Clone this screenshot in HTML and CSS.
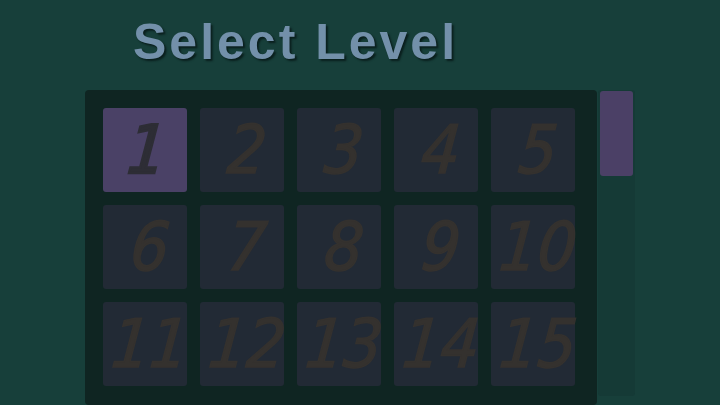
FILE: index.html
```html
<!DOCTYPE html>
<html>
<head>
<meta charset="utf-8">
<link rel="stylesheet" href="styles.css">
</head>
<body>
<div class="screen">
  <h1 class="title">Select Level</h1>
  <div class="main">
    <div class="panel">
      <div class="grid">
        <div class="tile current"><span>1</span></div>
        <div class="tile"><span>2</span></div>
        <div class="tile"><span>3</span></div>
        <div class="tile"><span>4</span></div>
        <div class="tile"><span>5</span></div>
        <div class="tile"><span>6</span></div>
        <div class="tile"><span>7</span></div>
        <div class="tile"><span>8</span></div>
        <div class="tile"><span>9</span></div>
        <div class="tile"><span>10</span></div>
        <div class="tile"><span>11</span></div>
        <div class="tile"><span>12</span></div>
        <div class="tile"><span>13</span></div>
        <div class="tile"><span>14</span></div>
        <div class="tile"><span>15</span></div>
      </div>
    </div>
    <div class="scrollbar">
      <div class="thumb"></div>
    </div>
  </div>
</div>
</body>
</html>
```
FILE: styles.css
```css
html, body {
  margin: 0;
  padding: 0;
  width: 720px;
  height: 405px;
  overflow: hidden;
  background: #173f3a;
}
.screen {
  width: 720px;
  height: 405px;
  display: flex;
  flex-direction: column;
}
.title {
  margin: 0;
  padding: 17px 0 0 133px;
  height: 50px;
  font-family: "Liberation Sans", Arial, sans-serif;
  font-weight: bold;
  font-size: 50px;
  line-height: 50px;
  letter-spacing: 3px;
  color: #7390aa;
  text-shadow: 2px 2px 2px rgba(5, 20, 20, 0.75);
}
.main {
  margin-top: 23px;
  margin-left: 85px;
  display: flex;
  gap: 1px;
  align-items: flex-start;
}
.panel {
  width: 472px;
  height: 297px;
  padding: 18px 22px 0 18px;
  background: #0f2522;
  border-radius: 4px;
}
.grid {
  display: grid;
  grid-template-columns: repeat(5, 84px);
  grid-auto-rows: 84px;
  gap: 13px;
}
.tile {
  background: #222a35;
  border-radius: 3px;
  display: flex;
  align-items: center;
  justify-content: center;
}
.tile span {
  display: inline-block;
  font-family: "DejaVu Sans Condensed", "DejaVu Sans", sans-serif;
  font-stretch: condensed;
  font-weight: normal;
  font-style: oblique;
  font-size: 67px;
  line-height: 1;
  color: #34312e;
  -webkit-text-stroke: 1.5px #34312e;
  transform: translateX(5px) skewX(-5deg);
  white-space: nowrap;
}
.tile.current {
  background: #4a4166;
}
.tile.current span {
  color: #2d2d35;
  -webkit-text-stroke: 2.4px #2d2d35;
  transform: translateX(2px) skewX(-5deg);
}
.scrollbar {
  width: 37px;
  height: 306px;
  background: #153a36;
  border-radius: 3px;
  padding: 1px 1px 0 2px;
  box-sizing: border-box;
}
.thumb {
  width: 33px;
  height: 85px;
  background: #4b4066;
  border-radius: 3px;
}
```
